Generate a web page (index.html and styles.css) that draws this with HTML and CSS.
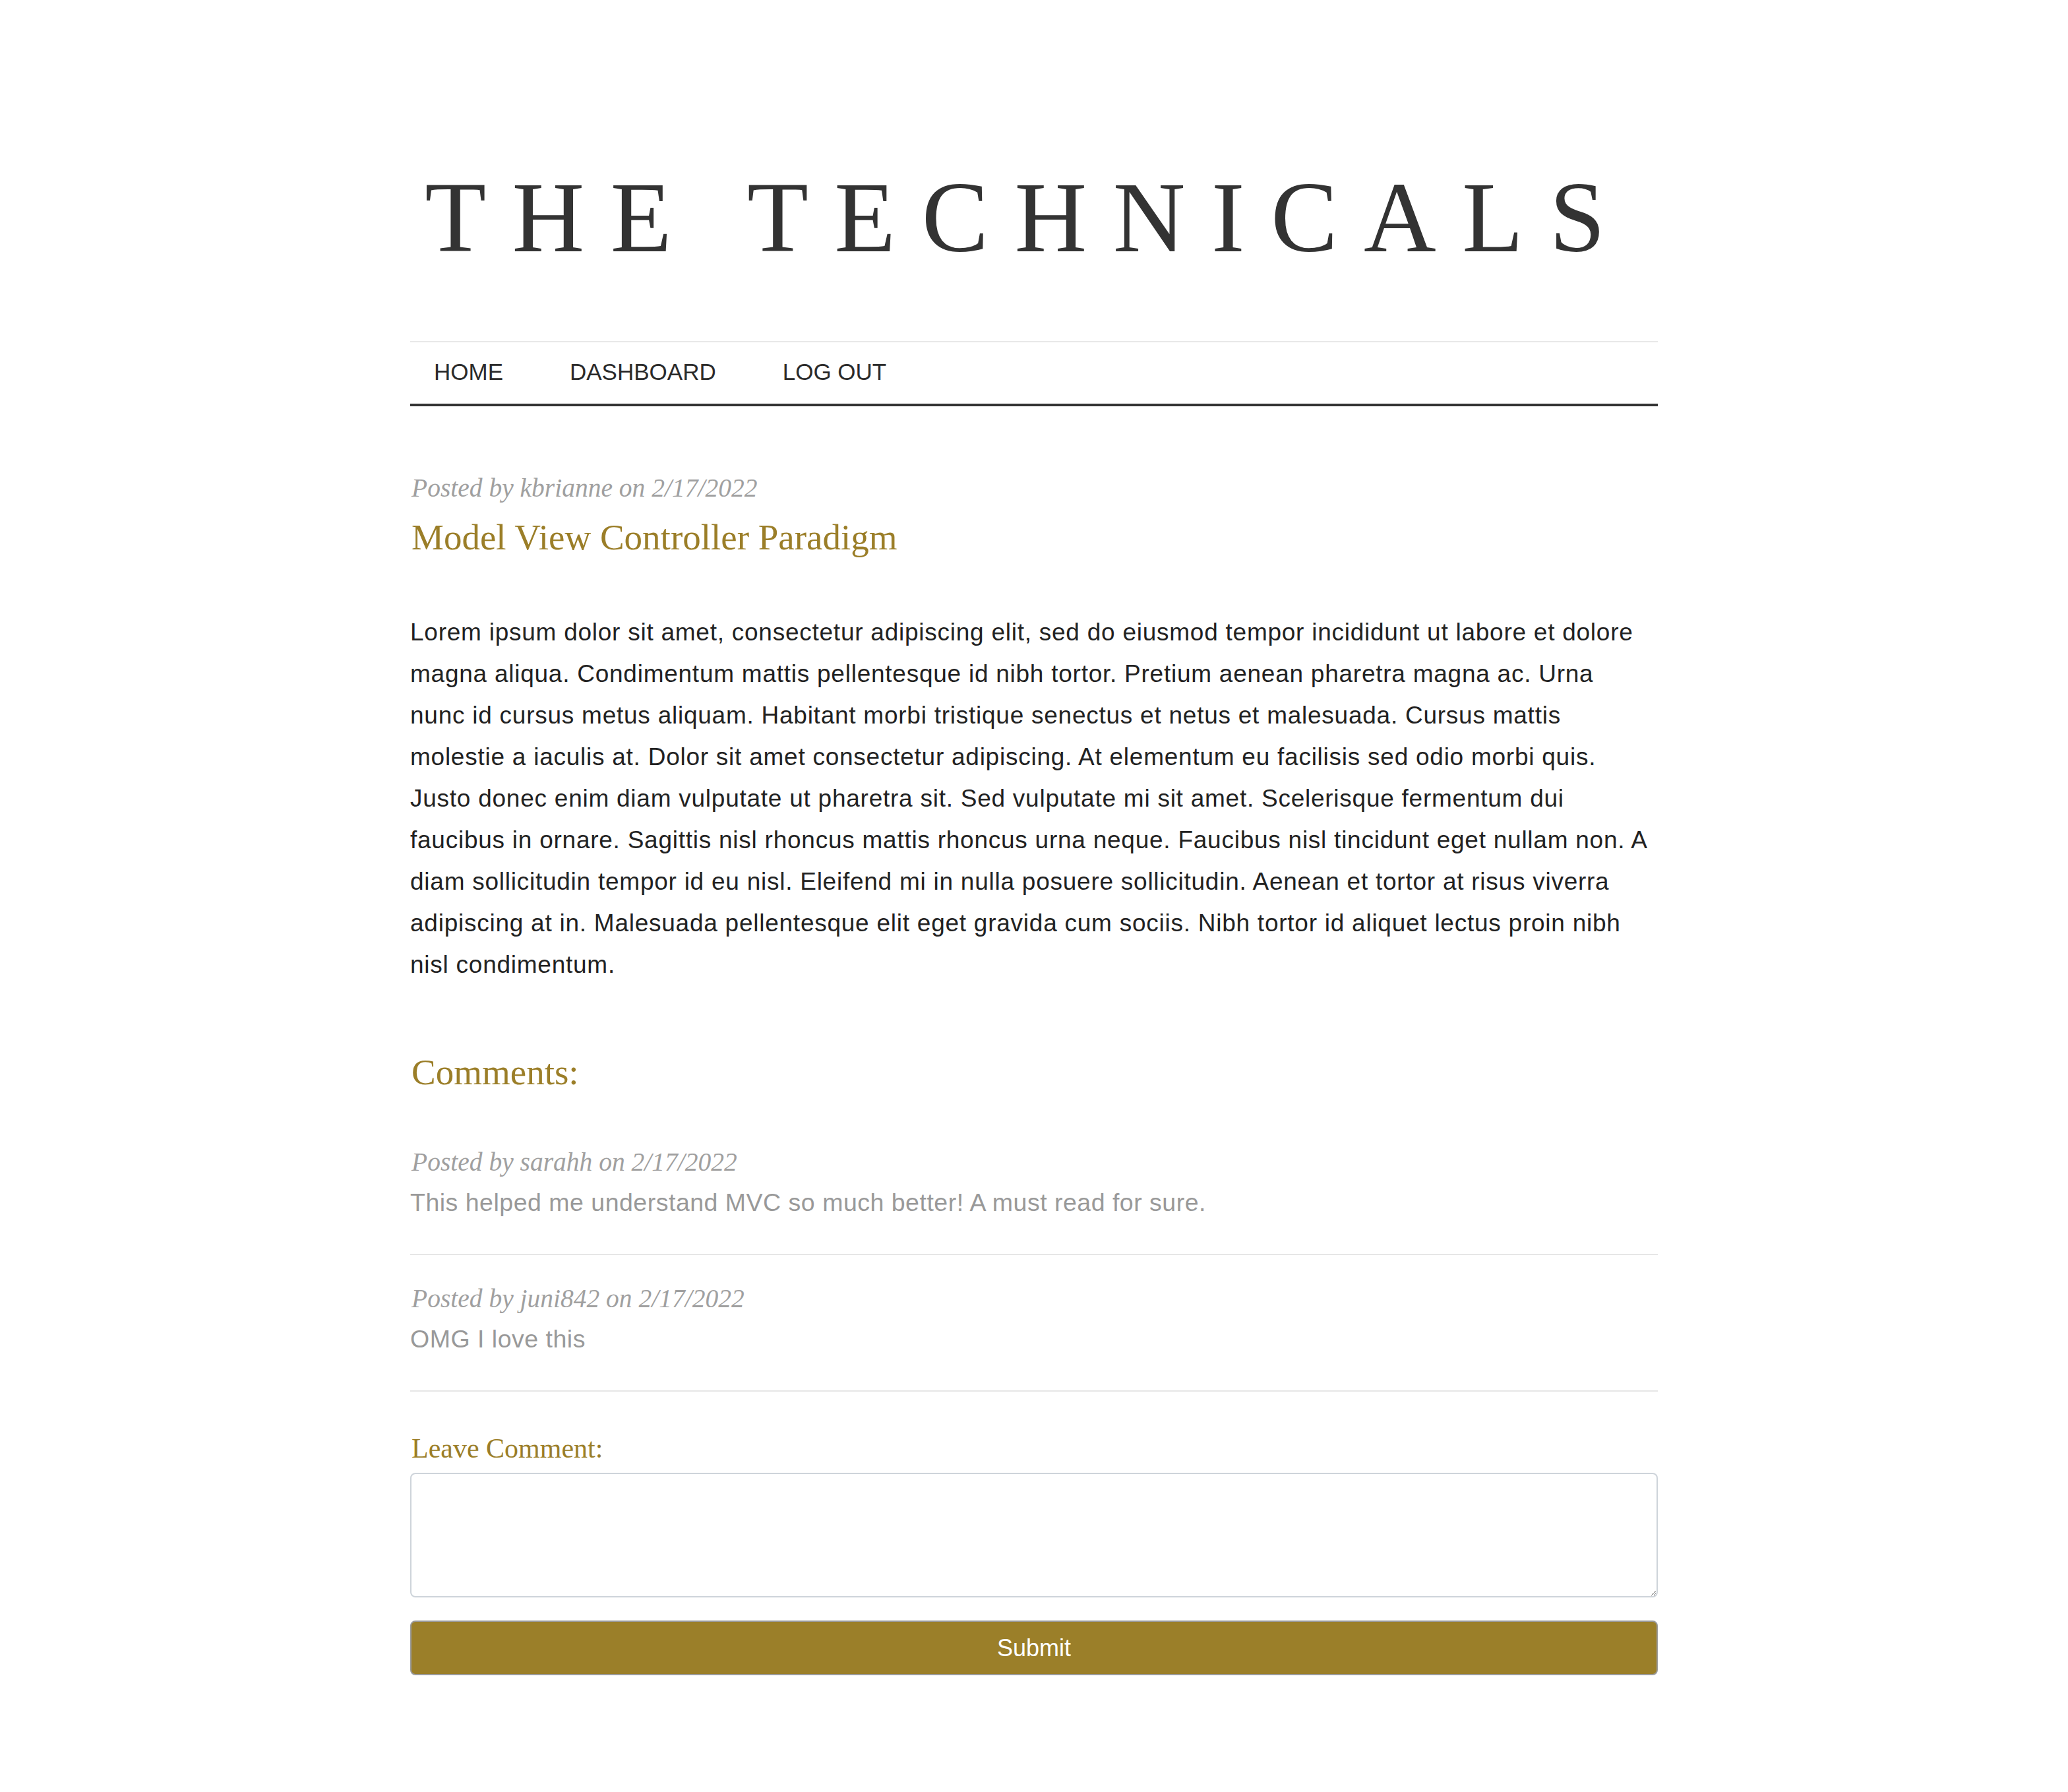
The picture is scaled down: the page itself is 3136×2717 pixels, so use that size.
FILE: index.html
```html
<!DOCTYPE html>
<html lang="en">
<head>
<meta charset="utf-8">
<title>The Technicals</title>
<link rel="stylesheet" href="styles.css">
</head>
<body>
<div class="container">
  <header class="site-header">
    <h1 class="site-title">THE TECHNICALS</h1>
  </header>
  <nav class="site-nav">
    <a href="#" class="nav-link">HOME</a>
    <a href="#" class="nav-link">DASHBOARD</a>
    <a href="#" class="nav-link">LOG OUT</a>
  </nav>
  <main class="main">
    <article class="post">
      <p class="meta">Posted by kbrianne on 2/17/2022</p>
      <h2 class="post-title">Model View Controller Paradigm</h2>
      <p class="post-body">Lorem ipsum dolor sit amet, consectetur adipiscing elit, sed do eiusmod tempor incididunt ut labore et dolore magna aliqua. Condimentum mattis pellentesque id nibh tortor. Pretium aenean pharetra magna ac. Urna nunc id cursus metus aliquam. Habitant morbi tristique senectus et netus et malesuada. Cursus mattis molestie a iaculis at. Dolor sit amet consectetur adipiscing. At elementum eu facilisis sed odio morbi quis. Justo donec enim diam vulputate ut pharetra sit. Sed vulputate mi sit amet. Scelerisque fermentum dui faucibus in ornare. Sagittis nisl rhoncus mattis rhoncus urna neque. Faucibus nisl tincidunt eget nullam non. A diam sollicitudin tempor id eu nisl. Eleifend mi in nulla posuere sollicitudin. Aenean et tortor at risus viverra adipiscing at in. Malesuada pellentesque elit eget gravida cum sociis. Nibh tortor id aliquet lectus proin nibh nisl condimentum.</p>
    </article>
    <section class="comments">
      <h3 class="comments-title">Comments:</h3>
      <div class="comment">
        <p class="meta">Posted by sarahh on 2/17/2022</p>
        <p class="comment-text">This helped me understand MVC so much better! A must read for sure.</p>
      </div>
      <div class="comment">
        <p class="meta">Posted by juni842 on 2/17/2022</p>
        <p class="comment-text">OMG I love this</p>
      </div>
      <form class="comment-form">
        <label class="form-label" for="comment">Leave Comment:</label>
        <textarea id="comment" class="form-textarea"></textarea>
        <button type="button" class="form-button">Submit</button>
      </form>
    </section>
  </main>
</div>
</body>
</html>
```
FILE: styles.css
```css
* { box-sizing: border-box; }
html, body { margin: 0; padding: 0; background: #fff; }
body { font-family: "Liberation Sans", Arial, sans-serif; color: #222; }

.container {
  width: 1892px;
  margin: 0 auto;
  padding-bottom: 176px;
}

.site-header {
  padding-top: 254px;
  text-align: center;
}
.site-title {
  margin: 0;
  padding-right: 18px;
  font-family: "Liberation Serif", "Times New Roman", serif;
  font-weight: normal;
  font-size: 152px;
  line-height: 152px;
  letter-spacing: 39.5px;
  color: #333;
}

.site-nav {
  margin-top: 111px;
  height: 99px;
  border-top: 2px solid #e8e8e8;
  border-bottom: 4px solid #333;
  display: flex;
  align-items: center;
  gap: 101px;
  padding-left: 36px;
}
.nav-link {
  font-family: "Liberation Sans", Arial, sans-serif;
  font-size: 35px;
  color: #2b2b2b;
  text-decoration: none;
  position: relative;
  top: -2px;
}

.main { padding-top: 101px; }

.meta {
  margin: 0;
  font-family: "Liberation Serif", "Times New Roman", serif;
  font-style: italic;
  font-size: 39.5px;
  color: #a0a0a0;
  padding-left: 2px;
}

.post-title {
  margin: 20px 0 0;
  font-family: "Liberation Serif", "Times New Roman", serif;
  font-weight: normal;
  font-size: 55px;
  color: #9b7e28;
  padding-left: 2px;
}

.post-body {
  margin: 81px 0 0;
  max-width: 1884px;
  font-size: 37px;
  letter-spacing: 0.75px;
  line-height: 63px;
  color: #222;
}

.comments { margin-top: 100px; }
.comments-title {
  margin: 0 0 39px;
  font-family: "Liberation Serif", "Times New Roman", serif;
  font-weight: normal;
  font-size: 55px;
  color: #9b7e28;
  padding-left: 2px;
}

.comment {
  padding: 43px 0 56px;
  border-bottom: 2px solid #e6e6e6;
}
.comment-text {
  margin: 17px 0 0;
  font-size: 37.5px;
  letter-spacing: 0.5px;
  color: #999;
}

.comment-form {
  display: flex;
  flex-direction: column;
  padding-top: 62px;
}
.form-label {
  font-family: "Liberation Serif", "Times New Roman", serif;
  font-size: 42px;
  color: #9b7e28;
  padding-left: 2px;
  line-height: normal;
}
.form-textarea {
  margin-top: 13px;
  height: 189px;
  width: 100%;
  border: 2px solid #ced4da;
  border-radius: 8px;
  resize: vertical;
  font-size: 36px;
  font-family: "Liberation Sans", Arial, sans-serif;
}
.form-button {
  margin-top: 35px;
  height: 83px;
  width: 100%;
  background: #9b7f29;
  color: #fff;
  border: 2px solid #9a9a9a;
  border-radius: 8px;
  font-family: "Liberation Sans", Arial, sans-serif;
  font-size: 36px;
}
```
